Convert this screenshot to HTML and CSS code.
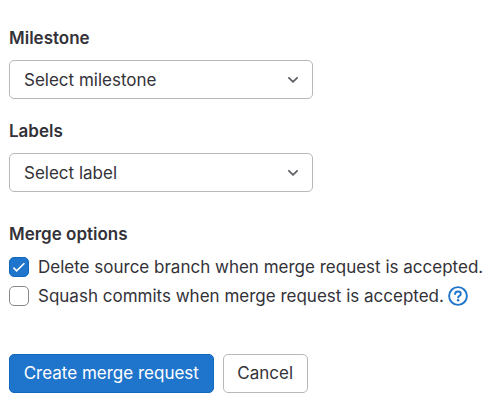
FILE: index.html
```html
<!DOCTYPE html>
<html lang="en">
<head>
<meta charset="UTF-8">
<meta name="viewport" content="width=device-width, initial-scale=1.0">
<title>New merge request</title>
<link rel="stylesheet" href="styles.css">
</head>
<body>
<form class="merge-form">
  <div class="form-group">
    <div class="form-label">Milestone</div>
    <button type="button" class="dropdown">
      <span>Select milestone</span>
      <svg class="chevron" viewBox="0 0 10 6"><path d="M0.9 0.8 5 4.8 9.1 0.8"/></svg>
    </button>
  </div>

  <div class="form-group">
    <div class="form-label">Labels</div>
    <button type="button" class="dropdown">
      <span>Select label</span>
      <svg class="chevron" viewBox="0 0 10 6"><path d="M0.9 0.8 5 4.8 9.1 0.8"/></svg>
    </button>
  </div>

  <div class="form-group options">
    <div class="form-label">Merge options</div>
    <label class="option">
      <input type="checkbox" checked>
      <svg class="check" viewBox="0 0 20 20"><path d="M4.4 10.6 7.6 13.8 15.4 6.2"/></svg>
      <span>Delete source branch when merge request is accepted.</span>
    </label>
    <label class="option">
      <input type="checkbox">
      <span>Squash commits when merge request is accepted.</span>
      <svg class="help" viewBox="0 0 20 20">
        <circle cx="10" cy="10" r="8.9"/>
        <path d="M7.1 8C7.2 6.4 8.4 5.5 10 5.5c1.7 0 2.8 1 2.8 2.4 0 2-2.7 1.9-2.7 3.7"/>
        <circle class="dot" cx="10.1" cy="14.3" r="1.25"/>
      </svg>
    </label>
  </div>

  <div class="actions">
    <button type="button" class="btn btn-confirm">Create merge request</button>
    <button type="button" class="btn">Cancel</button>
  </div>
</form>
</body>
</html>
```
FILE: styles.css
```css
body {
  margin: 0;
  background-color: #fff;
  color: #333238;
  font-family: Inter, "Liberation Sans", sans-serif;
  font-size: 17px;
  line-height: 20px;
}
.merge-form {
  padding: 28px 0 0 9px;
}
.form-group {
  margin-bottom: 22px;
}
.form-label {
  margin-bottom: 12px;
  font-weight: 600;
}

/* Dropdown toggles */
.dropdown {
  display: flex;
  align-items: center;
  justify-content: space-between;
  box-sizing: border-box;
  width: 303.5px;
  height: 39px;
  padding: 0 14px;
  border: 1px solid #b8b8bc;
  border-radius: 5px;
  background-color: #fff;
  color: inherit;
  font: inherit;
}
.chevron {
  width: 10px;
  height: 6px;
  fill: none;
  stroke: #626168;
  stroke-width: 1.8;
  stroke-linecap: round;
}

/* Checkboxes */
.options {
  padding-top: 10px;
}
.option {
  position: relative;
  display: flex;
  align-items: center;
  height: 20px;
  margin-bottom: 9px;
  white-space: nowrap;
}
.options .form-label {
  margin-bottom: 12.5px;
}
.option input {
  appearance: none;
  box-sizing: border-box;
  width: 20px;
  height: 20px;
  margin: 0 9px 0 0;
  border: 1px solid #89888d;
  border-radius: 5px;
  background-color: #fff;
}
.option input:checked {
  border-color: #1068bf;
  background-color: #1f75cb;
}
.check {
  position: absolute;
  top: 0;
  left: 0;
  width: 20px;
  height: 20px;
  fill: none;
  stroke: #fff;
  stroke-width: 1.6;
}
.help {
  width: 20px;
  height: 20px;
  margin-left: 4px;
  fill: none;
  stroke: #1f75cb;
  stroke-width: 1.9;
  stroke-linecap: round;
}
.help .dot {
  fill: #1f75cb;
  stroke: none;
}

/* Buttons */
.actions {
  display: flex;
  gap: 9px;
  padding-top: 26px;
}
.btn {
  box-sizing: border-box;
  height: 39px;
  padding: 0 13.7px;
  border: 1px solid #b8b8bc;
  border-radius: 5px;
  background-color: #fff;
  color: inherit;
  font: inherit;
}
.btn-confirm {
  border-color: #1068bf;
  background-color: #1f75cb;
  color: #fff;
}
```
